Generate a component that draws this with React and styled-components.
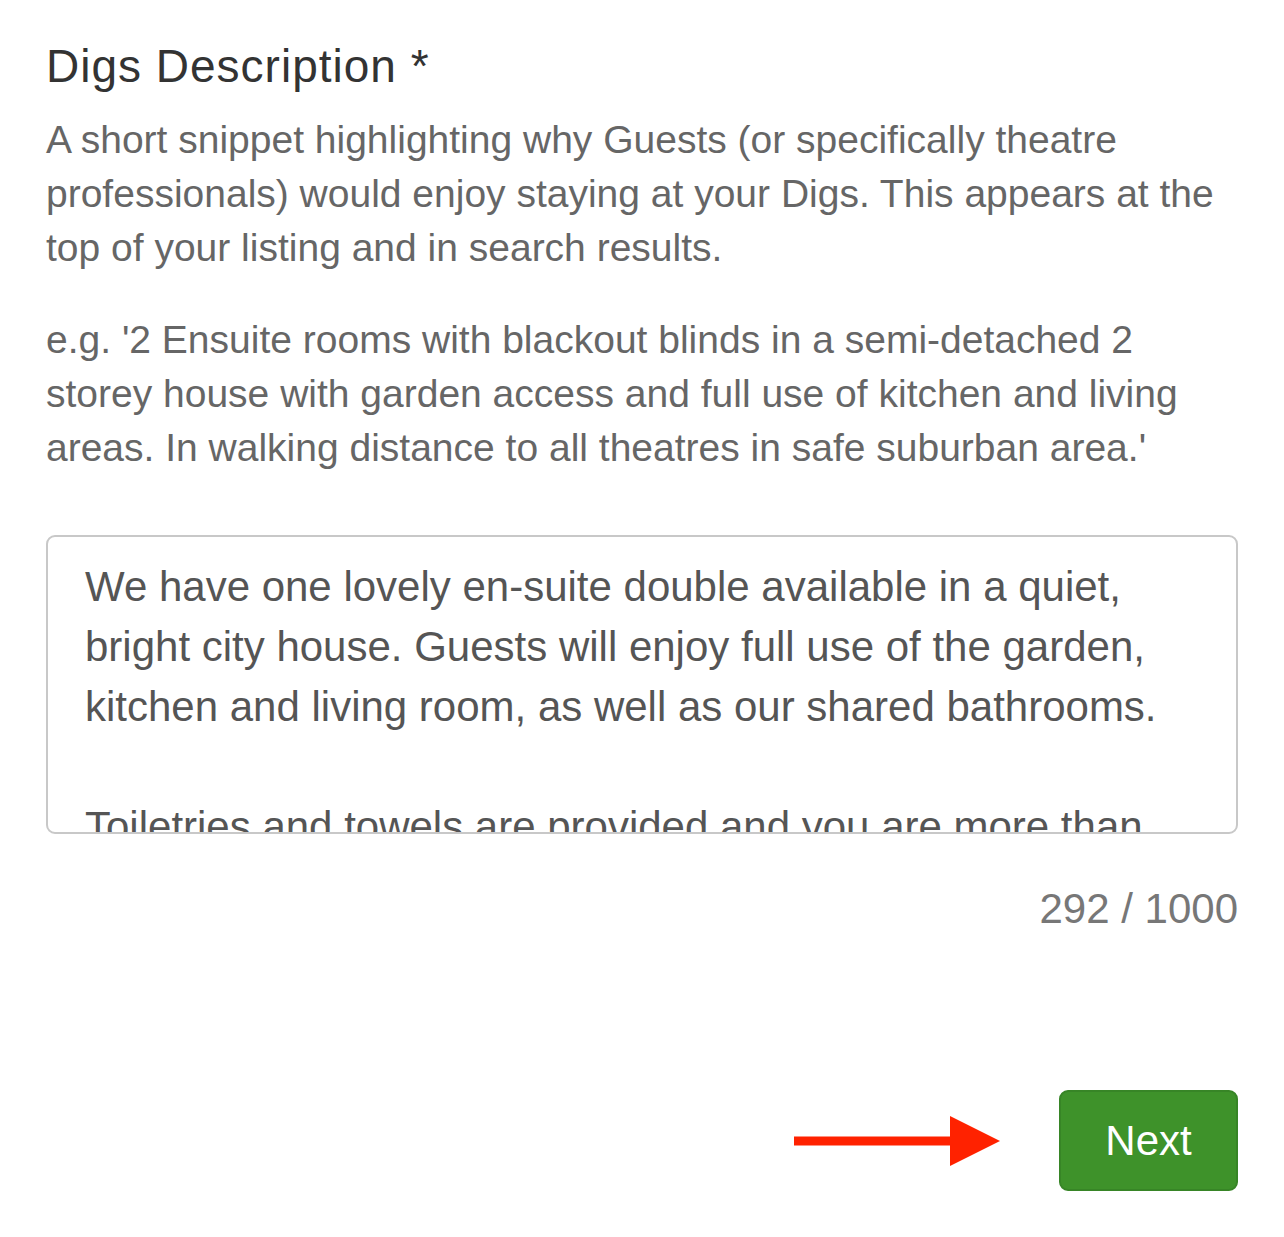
import styled, { createGlobalStyle } from 'styled-components';

const GlobalStyle = createGlobalStyle`
  html, body {
    margin: 0;
    padding: 0;
    background: #ffffff;
  }
  body {
    font-family: "Liberation Sans", Arial, Helvetica, sans-serif;
    -webkit-font-smoothing: antialiased;
  }
`;

const DESCRIPTION =
  "We have one lovely en-suite double available in a quiet, bright city house. Guests will enjoy full use of the garden, kitchen and living room, as well as our shared bathrooms.\n\n" +
  "Toiletries and towels are provided and you are more than welcome to use the washing machine. We are a short walk from all the theatres.";

export default function App ()
{
    return (
      <>
        <GlobalStyle />
        <Page>
          <Field>
            <Label>Digs Description *</Label>
            <Hint>
              A short snippet highlighting why Guests (or specifically theatre
              professionals) would enjoy staying at your Digs. This appears at the
              top of your listing and in search results.
            </Hint>
            <Hint>
              e.g. '2 Ensuite rooms with blackout blinds in a semi-detached 2
              storey house with garden access and full use of kitchen and living
              areas. In walking distance to all theatres in safe suburban area.'
            </Hint>
            <TextBox defaultValue={DESCRIPTION} readOnly />
            <Counter>292 / 1000</Counter>
          </Field>

          <Footer>
            <Arrow width="206" height="52" viewBox="0 0 206 52">
              <rect x="0" y="21.5" width="160" height="9" fill="#ff2200" />
              <polygon points="156,1 206,26 156,51" fill="#ff2200" />
            </Arrow>
            <NextButton type="button">Next</NextButton>
          </Footer>
        </Page>
      </>
    );
}

const Page = styled.div `
    width: 1284px;
    box-sizing: border-box;
    padding: 38px 46px 46px 46px;
`;

const Field = styled.div `
    display: flex;
    flex-direction: column;
`;

const Label = styled.h2 `
    margin: 0 0 19px 0;
    font-size: 46px;
    line-height: 56px;
    letter-spacing: 1px;
    font-weight: 400;
    color: #333333;
`;

const Hint = styled.p `
    margin: 0 0 38px 0;
    font-size: 39px;
    line-height: 54px;
    color: #666666;
`;

const TextBox = styled.textarea `
    display: block;
    box-sizing: border-box;
    width: 100%;
    height: 299px;
    margin: 22px 0 0 0;
    padding: 20px 37px;
    border: 2px solid #c8c8c8;
    border-radius: 9px;
    font-family: "Liberation Sans", Arial, Helvetica, sans-serif;
    font-size: 42px;
    line-height: 60px;
    color: #555555;
    resize: none;
    overflow: hidden;
    outline: none;
`;

const Counter = styled.div `
    align-self: flex-end;
    margin-top: 50px;
    font-size: 42px;
    line-height: 50px;
    color: #777777;
`;

const Footer = styled.div `
    display: flex;
    justify-content: flex-end;
    align-items: center;
    gap: 59px;
    margin-top: 156px;
`;

const Arrow = styled.svg `
    display: block;
`;

const NextButton = styled.button `
    width: 179px;
    height: 101px;
    box-sizing: border-box;
    border: 2px solid #378526;
    border-radius: 9px;
    background: #3e922a;
    color: #ffffff;
    font-family: "Liberation Sans", Arial, Helvetica, sans-serif;
    font-size: 42px;
    cursor: pointer;
`;
